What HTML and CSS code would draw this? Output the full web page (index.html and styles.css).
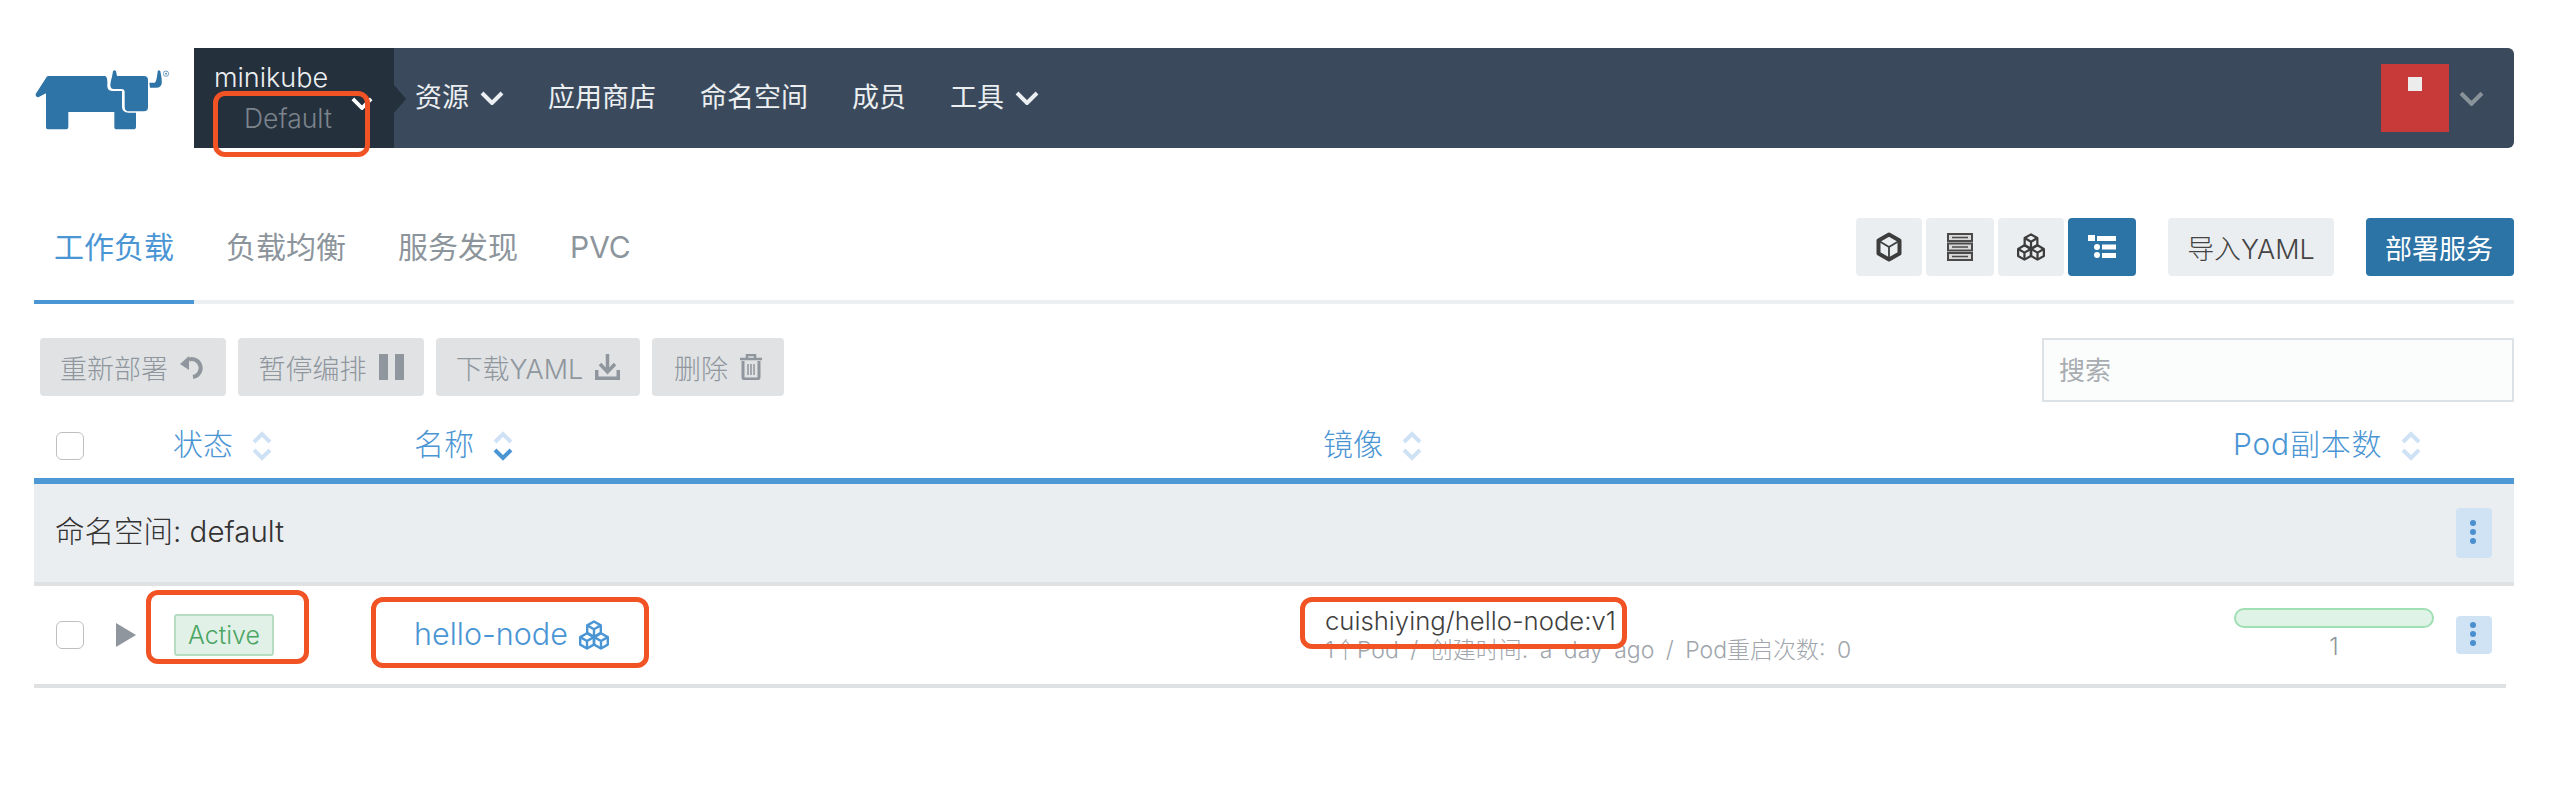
FILE: index.html
```html
<!DOCTYPE html>
<html lang="zh">
<head>
<meta charset="utf-8">
<title>工作负载</title>
<link rel="stylesheet" href="styles.css">
</head>
<body>
<svg class="defs" width="0" height="0" aria-hidden="true">
  <symbol id="cubes" viewBox="0 0 30 30">
    <g fill="none" stroke="currentColor" stroke-width="2.400" stroke-linejoin="round">
      <path d="M15 1.500l6.800 3.900v7.500L15 16.800l-6.800-3.900V5.400z"/>
      <path d="M8.200 5.400L15 9.300l6.800-3.900M15 9.300v7.500"/>
      <path d="M8 13.200l6.800 3.900v7.500L8 28.500l-6.800-3.900v-7.500z"/>
      <path d="M1.200 17.100L8 21l6.800-3.900M8 21v7.500"/>
      <path d="M22 13.200l6.800 3.900v7.500L22 28.500l-6.800-3.900v-7.500z"/>
      <path d="M15.200 17.100L22 21l6.800-3.900M22 21v7.500"/>
    </g>
  </symbol>
  <symbol id="sort" viewBox="0 0 20 30">
    <path d="M2 11l8-8 8 8" fill="none" stroke="#cfe1f4" stroke-width="4"/>
    <path d="M2 19l8 8 8-8" fill="none" stroke="#cfe1f4" stroke-width="4"/>
  </symbol>
  <symbol id="sort-down" viewBox="0 0 20 30">
    <path d="M2 11l8-8 8 8" fill="none" stroke="#cfe1f4" stroke-width="4"/>
    <path d="M2 19l8 8 8-8" fill="none" stroke="#4a95d4" stroke-width="4"/>
  </symbol>
  <symbol id="chev" viewBox="0 0 24 14">
    <path d="M2 2l10 10L22 2" fill="none" stroke="currentColor" stroke-width="4"/>
  </symbol>
  <symbol id="dots" viewBox="0 0 8 28">
    <circle cx="4" cy="4" r="3" fill="#4a8fd0"/>
    <circle cx="4" cy="13" r="3" fill="#4a8fd0"/>
    <circle cx="4" cy="22" r="3" fill="#4a8fd0"/>
  </symbol>
</svg>

<div class="page">
  <header class="topbar">
    <div class="logo">
      <svg width="170" height="100" viewBox="0 0 510 300">
        <path fill="#2f74a6" d="M85 78H255Q262 80 262 95V110Q264 123 278 123H306V172Q308 188 325 188H348V230Q348 238 340 238H290Q283 238 283 230V186H145V230Q145 238 137 238H85Q78 238 78 230V130L55 142Q46 141 47 132L78 84Q80 78 85 78Z"/>
        <path fill="#2f74a6" d="M272 96Q277 78 279 64Q284 58 288 64L291 78H372Q384 78 384 90V172Q384 184 372 184H328Q314 184 314 170V127Q314 117 304 117H280Q268 116 272 96Z"/>
        <path fill="#2f74a6" d="M388 98H404Q410 96 413 64Q417 58 421 64Q428 96 424 104Q420 113 410 113H390Z"/>
        <circle cx="438" cy="71" r="8" fill="none" stroke="#2f74a6" stroke-width="2"/>
        <circle cx="438" cy="71" r="2.500" fill="#2f74a6"/>
      </svg>
    </div>
    <nav class="navbar">
      <div class="cluster">
        <div class="cluster-name">minikube</div>
        <div class="cluster-project">Default</div>
        <svg class="cluster-chev"><use href="#chev"/></svg>
        <div class="mark mark-project"></div>
      </div>
      <ul class="menu">
        <li class="menu-item">资源<svg class="chev"><use href="#chev"/></svg></li>
        <li class="menu-item">应用商店</li>
        <li class="menu-item">命名空间</li>
        <li class="menu-item">成员</li>
        <li class="menu-item">工具<svg class="chev"><use href="#chev"/></svg></li>
      </ul>
      <div class="user">
        <div class="avatar"><span class="avatar-dot"></span></div>
        <svg class="user-chev"><use href="#chev"/></svg>
      </div>
    </nav>
  </header>

  <div class="tabbar">
    <div class="tabs">
      <div class="tab tab-active">工作负载</div>
      <div class="tab">负载均衡</div>
      <div class="tab">服务发现</div>
      <div class="tab">PVC</div>
    </div>
    <div class="tools">
      <div class="view-group">
        <button class="view-btn view-a">
          <svg width="28" height="30" viewBox="0 0 28 30">
            <path d="M14 2.500l10.500 6v13L14 27.500l-10.500-6v-13z" fill="none" stroke="#3d3d3d" stroke-width="4" stroke-linejoin="round"/>
            <path d="M4 9l10 6 10-6M14 15v12" fill="none" stroke="#3d3d3d" stroke-width="1.800"/>
          </svg>
        </button>
        <button class="view-btn view-b">
          <svg width="26" height="28" viewBox="0 0 26 28">
            <g fill="#d9d9d9" stroke="#4a4a4a" stroke-width="2">
              <rect x="1" y="1" width="24" height="7"/>
              <rect x="1" y="10.500" width="24" height="7"/>
              <rect x="1" y="20" width="24" height="7"/>
            </g>
            <g fill="none" stroke="#4a4a4a" stroke-width="1.500">
              <path d="M5 4.500H21M5 14H21M5 23.500H21"/>
            </g>
          </svg>
        </button>
        <button class="view-btn view-c"><svg class="cubes-dark"><use href="#cubes"/></svg></button>
        <button class="view-btn view-d">
          <svg width="28" height="26" viewBox="0 0 28 26">
            <rect x="0" y="1" width="7" height="6" fill="#fff"/>
            <rect x="9" y="2" width="19" height="5" fill="#fff"/>
            <circle cx="9" cy="13" r="3" fill="#fff"/>
            <rect x="14" y="10.500" width="14" height="5" fill="#fff"/>
            <circle cx="9" cy="21" r="3" fill="#fff"/>
            <rect x="14" y="19" width="14" height="5" fill="#fff"/>
          </svg>
        </button>
      </div>
      <button class="btn btn-plain">导入YAML</button>
      <button class="btn btn-primary">部署服务</button>
    </div>
  </div>

  <div class="actions">
    <div class="action-list">
      <button class="action w-186">重新部署
        <svg width="26" height="24" viewBox="0 0 26 24">
          <path d="M9 4.500A9 9 0 1 1 13 22" fill="none" stroke="#8f969d" stroke-width="4"/>
          <path d="M0 9l9-8v14z" fill="#8f969d"/>
        </svg>
      </button>
      <button class="action w-186">暂停编排
        <svg width="25" height="26" viewBox="0 0 25 26"><rect width="9" height="26" fill="#8f969d"/><rect x="16" width="9" height="26" fill="#8f969d"/></svg>
      </button>
      <button class="action w-204">下载YAML
        <svg width="25" height="26" viewBox="0 0 25 26">
          <path d="M12.500 0V15" stroke="#8f969d" stroke-width="3.500" fill="none"/>
          <path d="M5 10l7.500 8 7.500-8" stroke="#8f969d" stroke-width="3.500" fill="none"/>
          <path d="M1.700 16V24.300H23.300V16" stroke="#8f969d" stroke-width="3.500" fill="none"/>
        </svg>
      </button>
      <button class="action w-132">删除
        <svg width="22" height="26" viewBox="0 0 22 26">
          <path d="M0 5H22M7 4V1H15V4" stroke="#8f969d" stroke-width="2.500" fill="none"/>
          <path d="M3 7V23Q3 25 5 25H17Q19 25 19 23V7" stroke="#8f969d" stroke-width="3" fill="none"/>
          <path d="M8 10V21M11 10V21M14 10V21" stroke="#8f969d" stroke-width="1.500" fill="none"/>
        </svg>
      </button>
    </div>
    <input class="search" type="text" placeholder="搜索">
  </div>

  <div class="cols thead">
    <div class="cell-check"><span class="checkbox"></span></div>
    <div class="th">状态<svg class="sort"><use href="#sort"/></svg></div>
    <div class="th">名称<svg class="sort"><use href="#sort-down"/></svg></div>
    <div class="th">镜像<svg class="sort"><use href="#sort"/></svg></div>
    <div class="th th-wide">Pod副本数<svg class="sort"><use href="#sort"/></svg></div>
  </div>

  <div class="group-row">
    <span class="group-title">命名空间: default</span>
    <button class="more more-tall"><svg class="dots"><use href="#dots"/></svg></button>
  </div>

  <div class="cols row">
    <div class="cell-check">
      <span class="checkbox"></span>
      <span class="expand"></span>
    </div>
    <div class="cell">
      <span class="badge">Active</span>
      <div class="mark mark-status"></div>
    </div>
    <div class="cell">
      <span class="link">hello-node</span>
      <svg class="cubes-blue"><use href="#cubes"/></svg>
      <div class="mark mark-name"></div>
    </div>
    <div class="cell cell-image">
      <div class="image-name">cuishiying/hello-node:v1</div>
      <div class="image-sub">1个Pod / 创建时间: a day ago / Pod重启次数: 0</div>
      <div class="mark mark-image"></div>
    </div>
    <div class="cell cell-scale">
      <div class="scale">
        <div class="scale-bar"></div>
        <div class="scale-num">1</div>
      </div>
      <button class="more more-short"><svg class="dots"><use href="#dots"/></svg></button>
    </div>
  </div>
</div>
</body>
</html>
```
FILE: styles.css
```css
* { box-sizing: border-box; }
html, body { margin: 0; padding: 0; background: #fff; }
body {
  font-family: Inter, "Noto Sans CJK SC", sans-serif;
  font-weight: 400;
  color: #444;
}
button { font: inherit; border: 0; padding: 0; cursor: pointer; }
ul { list-style: none; margin: 0; padding: 0; }
svg { display: block; }
.defs { position: absolute; }

.page { padding: 48px 38px 0 34px; }

.topbar { display: flex; height: 100px; }
.logo { width: 160px; flex: none; }
.logo svg { margin-left: -14px; margin-top: 2px; }
.navbar {
  flex: 1;
  display: flex;
  align-items: center;
  background: #3a4a5c;
  border-radius: 0 6px 6px 0;
  color: #eceff1;
}

.cluster {
  position: relative;
  width: 200px;
  height: 100%;
  flex: none;
  background: #25303d;
  padding: 10px 0 0 20px;
}
.cluster::after {
  content: "";
  position: absolute;
  left: 200px;
  top: 37px;
  border-left: 12px solid #25303d;
  border-top: 14px solid transparent;
  border-bottom: 14px solid transparent;
}
.cluster-name { font-size: 27px; line-height: 40px; font-weight: 300; color: #eceff1; }
.cluster-project { font-size: 26.500px; line-height: 40px; font-weight: 300; padding-left: 30px; color: #7b838b; }
.cluster-chev { position: absolute; left: 157px; top: 49px; width: 22px; height: 13px; color: #fff; }

.menu { display: flex; gap: 44px; margin-left: 21px; flex: 1; }
.menu-item {
  display: flex;
  align-items: center;
  font-size: 27px;
  line-height: 40px;
}
.chev { width: 24px; height: 14px; margin-left: 11px; color: #eceff1; }

.user { display: flex; align-items: center; padding-right: 30px; }
.avatar { width: 68px; height: 68px; background: #c83939; position: relative; }
.avatar-dot { position: absolute; left: 27px; top: 13px; width: 14px; height: 14px; background: #ececec; }
.user-chev { width: 25px; height: 15px; margin-left: 10px; color: #8a929a; }

.tabbar {
  display: flex;
  justify-content: space-between;
  align-items: flex-start;
  height: 86px;
  margin-top: 70px;
  border-bottom: 4px solid #eceff0;
}
.tabs { display: flex; gap: 12px; }
.tab {
  height: 86px;
  padding: 8px 20px 0;
  font-size: 30px;
  line-height: 42px;
  color: #8d959c;
  border-bottom: 4px solid transparent;
}
.tab-active { color: #4a95d4; border-bottom-color: #4a95d4; }

.tools { display: flex; gap: 32px; }
.view-group { display: flex; gap: 4px; }
.view-btn {
  height: 58px;
  background: #ebeef0;
  border-radius: 4px;
  display: flex;
  align-items: center;
  justify-content: center;
}
.view-a { width: 66px; }
.view-b { width: 68px; }
.view-c { width: 66px; }
.view-d { width: 68px; background: #2c73a6; }
.cubes-dark { width: 28px; height: 28px; color: #3d3d3d; }
.btn { height: 58px; font-size: 27px; color: #444; border-radius: 4px; font-weight: 300; }
.btn-plain { width: 166px; background: #ebeef0; }
.btn-primary { width: 148px; padding-right: 2px; background: #2c73a6; color: #fff; font-weight: 400; }

.actions {
  display: flex;
  justify-content: space-between;
  align-items: flex-start;
  height: 62px;
  margin-top: 34px;
  padding-left: 6px;
}
.action-list { display: flex; gap: 12px; }
.action {
  height: 58px;
  display: flex;
  align-items: center;
  justify-content: center;
  gap: 12px;
  background: #e0e2e4;
  color: #8f969d;
  font-size: 27px;
  font-weight: 300;
  border-radius: 4px;
}
.w-186 { width: 186px; }
.w-204 { width: 204px; }
.w-132 { width: 132px; }
.search {
  width: 472px;
  height: 64px;
  border: 2px solid #dde2e6;
  background: #fbfcfc;
  padding: 0 15px;
  font: inherit;
  font-size: 26px;
  outline: 0;
}
.search::placeholder { color: #a8adb1; opacity: 1; }

.cols {
  display: grid;
  grid-template-columns: 141px 241px 909px 910px 1fr;
  align-items: center;
}
.thead {
  height: 78px;
  padding-top: 14px;
}
.th {
  display: flex;
  align-items: center;
  gap: 19px;
  margin-left: -2px;
  color: #4a95d4;
  font-size: 30px;
  line-height: 36px;
  font-weight: 300;
  position: relative;
  top: -2px;
}
.th-wide { letter-spacing: .8px; }
.sort { width: 20px; height: 30px; margin-top: 4px; }
.cell-check { display: flex; align-items: center; padding-left: 22px; }
.checkbox {
  width: 28px;
  height: 28px;
  border: 1px solid #bdbfc2;
  border-radius: 6px;
  background: #fff;
}
.expand {
  margin-left: 32px;
  border-left: 20px solid #8f969d;
  border-top: 12px solid transparent;
  border-bottom: 12px solid transparent;
}

.group-row {
  display: flex;
  align-items: center;
  justify-content: space-between;
  height: 108px;
  border-top: 6px solid #4f98d6;
  border-bottom: 4px solid #dfe1e3;
  background: #ebeef0;
  padding: 0 22px 0 21px;
}
.group-title { font-size: 29.500px; line-height: 36px; margin-top: -4px; font-weight: 300; color: #333; }
.more {
  width: 36px;
  background: #cfe3f5;
  border-radius: 4px;
  display: flex;
  align-items: center;
  justify-content: center;
}
.more-tall { height: 50px; }
.more-short { height: 38px; }
.dots { width: 8px; height: 28px; margin-left: -2px; }

.row {
  height: 102px;
  margin-right: 8px;
  border-bottom: 4px solid #dfe1e3;
}
.cell { position: relative; display: flex; align-items: center; }
.badge {
  width: 100px;
  height: 42px;
  margin-left: -1px;
  display: flex;
  align-items: center;
  justify-content: center;
  background: #e2f1e7;
  border: 2px solid #b6dcc1;
  border-radius: 3px;
  color: #4aa563;
  font-size: 25px;
  font-weight: 300;
}
.link { color: #4a95d4; font-size: 30.500px; line-height: 36px; margin: -2px 0 0 -2px; font-weight: 300; }
.cubes-blue { width: 30px; height: 30px; margin-left: 11px; color: #4a95d4; }
.cell-image { display: block; }
.image-name { font-size: 25.700px; line-height: 30px; margin-top: 1px; margin-bottom: -1px; color: #3f3f3f; font-weight: 300; }
.image-sub { font-size: 23px; line-height: 30px; color: #a0a6ac; font-weight: 300; word-spacing: 5px; }
.cell-scale { justify-content: space-between; padding-right: 14px; }
.scale { width: 200px; margin-left: -1px; text-align: center; }
.scale-bar { height: 20px; background: #dff3e7; border: 2px solid #a0deb4; border-radius: 10px; }
.scale-num { font-size: 24px; line-height: 30px; margin-top: 4px; color: #8f969d; font-weight: 300; }

.mark {
  position: absolute;
  border: 5px solid #f15325;
  border-radius: 12px;
  pointer-events: none;
}
.mark-project { left: 19px; top: 43px; width: 157px; height: 66px; }
.mark-status { left: -29px; top: -24px; width: 163px; height: 74px; }
.mark-name { left: -45px; top: -21px; width: 278px; height: 71px; }
.mark-image { left: -25px; top: -8px; width: 327px; height: 52px; }
```
